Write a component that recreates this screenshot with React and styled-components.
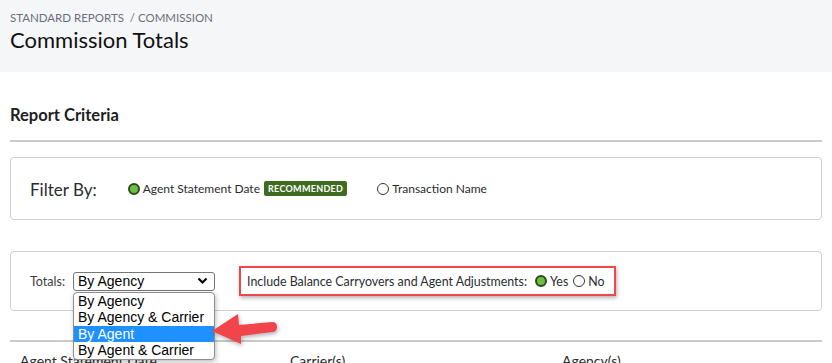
import React from 'react'
import styled, { createGlobalStyle } from 'styled-components'

const GlobalStyle = createGlobalStyle`
  html, body { margin: 0; padding: 0; background: #fff; }
  body {
    font-family: Lato, "Open Sans", sans-serif;
    color: #1b1d22;
    overflow: hidden;
  }
`

const PageHeader = styled.header`
  background: #f5f6f8;
  height: 72px;
  padding: 10px 10px 0;
  box-sizing: border-box;
`

const Breadcrumb = styled.div`
  font-size: 11.5px;
  color: #6b6f7a;
  line-height: 15px;
`

const Title = styled.h1`
  margin: 1px 0 0;
  font-size: 22px;
  font-weight: 400;
  line-height: 28px;
  color: #111;
`

const Main = styled.main`
  padding: 0 10px;
`

const SectionTitle = styled.h2`
  margin: 0;
  padding-top: 33px;
  font-size: 16.5px;
  font-weight: 700;
  line-height: 20px;
  color: #1c1e22;
`

const Divider = styled.hr`
  margin: ${p => p.$top || 0}px 0 0;
  border: 0;
  height: 2px;
  background: #c8cacd;
`

const Panel = styled.section`
  position: relative;
  margin-top: ${p => p.$top}px;
  height: ${p => p.$height}px;
  border: 1px solid #cdd0d4;
  border-radius: 4px;
  box-sizing: border-box;
  display: flex;
  align-items: center;
  padding: 0 19px;
`

const FilterLabel = styled.span`
  font-size: 17px;
  color: #2a2c30;
  margin-right: 31px;
  position: relative;
  top: 1px;
`

const Radio = styled.span`
  display: inline-block;
  width: 12px;
  height: 12px;
  border-radius: 50%;
  box-sizing: border-box;
  flex: none;
  border: ${p => (p.$checked ? '2px solid #2c4a1d' : '1px solid #333')};
  background: ${p => (p.$checked ? '#6cbf43' : '#fff')};
  margin-right: 3px;
`

const Option = styled.label`
  display: inline-flex;
  align-items: center;
  font-size: ${p => p.$size || 12}px;
  color: #2a2c30;
  margin-right: ${p => p.$gap || 0}px;
`

const Badge = styled.span`
  display: inline-block;
  background: #3e6b1f;
  color: #fff;
  font-size: 9px;
  font-weight: 700;
  letter-spacing: 0.3px;
  padding: 2px 4px;
  border-radius: 2px;
  margin-left: 4px;
  line-height: 11px;
`

const TotalsLabel = styled.span`
  font-size: 12.5px;
  color: #3a3c40;
  margin-right: 8px;
`

const SelectWrap = styled.div`
  position: relative;
  width: 142px;
`

const SelectBox = styled.div`
  height: 19px;
  border: 1px solid #767676;
  border-radius: 3px;
  box-sizing: border-box;
  display: flex;
  align-items: center;
  justify-content: space-between;
  padding: 0 6px 0 4px;
  font-family: "Liberation Sans", Arial, sans-serif;
  font-size: 14px;
  color: #000;
  background: #fff;
`

const Menu = styled.ul`
  position: absolute;
  top: 20px;
  left: 0;
  width: 142px;
  margin: 0;
  padding: 0;
  list-style: none;
  background: #fff;
  border: 1px solid #8f8f8f;
  border-radius: 4px;
  box-sizing: border-box;
  box-shadow: 1px 2px 5px rgba(0, 0, 0, 0.25);
  overflow: hidden;
  z-index: 5;
`

const MenuItem = styled.li`
  height: 16.5px;
  line-height: 16px;
  padding-left: 4px;
  font-family: "Liberation Sans", Arial, sans-serif;
  font-size: 14px;
  color: ${p => (p.$active ? '#fff' : '#000')};
  background: ${p => (p.$active ? '#1e90ff' : 'transparent')};
  white-space: nowrap;
`

const Highlight = styled.div`
  display: flex;
  align-items: center;
  margin-left: 24px;
  width: 377px;
  height: 30px;
  padding: 0 5px 0 6px;
  border: 2.5px solid #f2464d;
  box-sizing: border-box;
  box-shadow: 1px 2px 4px rgba(0, 0, 0, 0.3);
  font-size: 12.4px;
  color: #2a2c30;
`

const HighlightText = styled.span`
  margin-right: 8px;
`

const Arrow = styled.svg`
  position: absolute;
  left: 189px;
  top: 53px;
  z-index: 6;
  filter: drop-shadow(1px 2px 2px rgba(0, 0, 0, 0.3));
`

const Columns = styled.div`
  display: grid;
  grid-template-columns: 270px 272px 1fr;
  padding: 10px 10px 0;
  font-size: 14px;
  color: #2a2c30;
`

const Chevron = () => (
  <svg width="11" height="8" viewBox="0 0 11 8">
    <path d="M1.5 1.5 L5.5 5.5 L9.5 1.5" fill="none" stroke="#000" strokeWidth="2.2" />
  </svg>
)

export default function App() {
  return (
    <>
      <GlobalStyle />
      <PageHeader>
        <Breadcrumb>STANDARD REPORTS &nbsp;/ COMMISSION</Breadcrumb>
        <Title>Commission Totals</Title>
      </PageHeader>
      <Main>
        <SectionTitle>Report Criteria</SectionTitle>
        <Divider $top={15} />
        <Panel $top={15} $height={63}>
          <FilterLabel>Filter By:</FilterLabel>
          <Option $gap={30}>
            <Radio $checked />
            Agent Statement Date
            <Badge>RECOMMENDED</Badge>
          </Option>
          <Option>
            <Radio />
            Transaction Name
          </Option>
        </Panel>
        <Panel $top={31} $height={60}>
          <TotalsLabel>Totals:</TotalsLabel>
          <SelectWrap>
            <SelectBox>
              By Agency
              <Chevron />
            </SelectBox>
            <Menu>
              <MenuItem>By Agency</MenuItem>
              <MenuItem>By Agency &amp; Carrier</MenuItem>
              <MenuItem $active>By Agent</MenuItem>
              <MenuItem>By Agent &amp; Carrier</MenuItem>
            </Menu>
          </SelectWrap>
          <Highlight>
            <HighlightText>Include Balance Carryovers and Agent Adjustments:</HighlightText>
            <Option $gap={5} $size={12.4}>
              <Radio $checked />
              Yes
            </Option>
            <Option $size={12.4}>
              <Radio />
              No
            </Option>
          </Highlight>
          <Arrow width="82" height="44" viewBox="0 0 82 44">
            <path
              d="M12 26 L38 9 L39 20 L72 17 Q77 17 77 22 Q77 27 72 27 L41 31 L41 39 Z"
              fill="#f1444b"
            />
          </Arrow>
        </Panel>
        <Divider $top={29} />
        <Columns>
          <span>Agent Statement Date</span>
          <span>Carrier(s)</span>
          <span>Agency(s)</span>
        </Columns>
      </Main>
    </>
  )
}
